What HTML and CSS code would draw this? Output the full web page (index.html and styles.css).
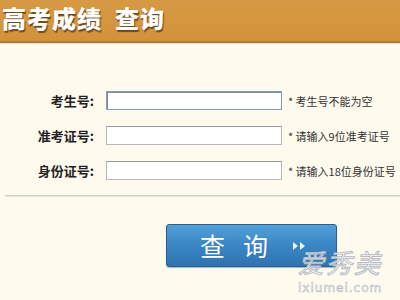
FILE: index.html
```html
<!DOCTYPE html>
<html lang="zh">
<head>
<meta charset="utf-8">
<link rel="stylesheet" href="styles.css">
</head>
<body>
<div class="page">
  <header class="header"><h1 class="title"><span>高考成绩</span><span>查询</span></h1></header>
  <form class="form">
    <div class="row">
      <label class="label">考生号:</label>
      <input class="field focus" type="text">
      <span class="hint">* 考生号不能为空</span>
    </div>
    <div class="row">
      <label class="label">准考证号:</label>
      <input class="field" type="text">
      <span class="hint">* 请输入9位准考证号</span>
    </div>
    <div class="row">
      <label class="label">身份证号:</label>
      <input class="field" type="text">
      <span class="hint">* 请输入18位身份证号</span>
    </div>
  </form>
  <div class="sep"></div>
  <div class="actions">
    <button class="btn" type="button"><span class="btn-text">查</span><span class="btn-text">询</span><svg class="arrows" width="14" height="10" viewBox="0 0 14 10"><path d="M1 1 L6 5 L1 9 Z M8 1 L13 5 L8 9 Z" fill="#eaf4fb"/></svg></button>
  </div>
  <div class="watermark"><div class="wm-big">爱秀美</div><div class="wm-small">ixiumei.com</div></div>
</div>
</body>
</html>
```
FILE: styles.css
```css
html, body { margin: 0; padding: 0; }
body {
  width: 400px; height: 300px; overflow: hidden;
  background: #fefaee;
  font-family: "Noto Sans CJK SC", "DejaVu Sans", sans-serif;
}
.page { position: relative; width: 400px; height: 300px; }
.header {
  height: 41px;
  background: linear-gradient(#d69a44, #d2923a);
  border-bottom: 2px solid #b07a3a;
  box-shadow: 0 1px 0 #e8d8c0;
}
.title {
  margin: 0; padding: 0 0 0 2px;
  display: flex; gap: 13px;
  font-size: 24px; line-height: 35px; font-weight: 900;
  color: #fff; letter-spacing: 1px;
  text-shadow: 1px 2px 1px #6b4a22;
  font-family: "Noto Sans CJK SC", sans-serif;
}
.form { display: flex; flex-direction: column; gap: 16px; padding-top: 48px; }
.row { display: flex; align-items: center; height: 19px; }
.label {
  width: 94px; text-align: right; font-size: 13px; font-weight: bold; color: #222;
}
.field {
  box-sizing: border-box; margin: 0 0 0 12px;
  width: 176px; height: 19px;
  border: 1px solid #b8b8b8; border-top-color: #9a9a9a;
  background: #fff; padding: 0;
}
.field.focus { border: 1px solid #7f9db9; box-shadow: inset 1px 1px 0 #888; }
.hint { margin-left: 6px; font-size: 11px; color: #333; white-space: nowrap; }
.sep {
  margin: 15px 0 0 5px; height: 1px;
  background: #d8d2c0; border-bottom: 1px solid #ece6d6;
}
.actions { display: flex; padding: 27px 0 0 166px; }
.btn {
  box-sizing: border-box; width: 171px; height: 43px;
  border: 1px solid #2a5f8e; border-radius: 3px;
  background: linear-gradient(#52a0d8, #3a86c4 50%, #2f73b0);
  display: flex; align-items: center; padding: 0 0 0 33px; cursor: pointer;
  box-shadow: 0 1px 1px #9bb;
}
.btn-text { color: #fff; font-size: 25px; line-height: 1; margin-right: 18px; font-family: "Noto Sans CJK SC", sans-serif; }
.btn-text + .btn-text { margin-right: 24px; }
.arrows { display: block; }
.watermark { position: absolute; left: 298px; top: 243px; text-align: center; }
.wm-big {
  font-size: 26px; line-height: 38px; font-style: italic;
  -webkit-text-stroke: 1px #b8bcc6; color: rgba(255,255,255,0.75);
  letter-spacing: 2px;
}
.wm-small {
  font-size: 12px; line-height: 14px; font-family: "DejaVu Sans", sans-serif; letter-spacing: 1px;
  -webkit-text-stroke: 0.6px #b8bcc6; color: #fff;
}
```
